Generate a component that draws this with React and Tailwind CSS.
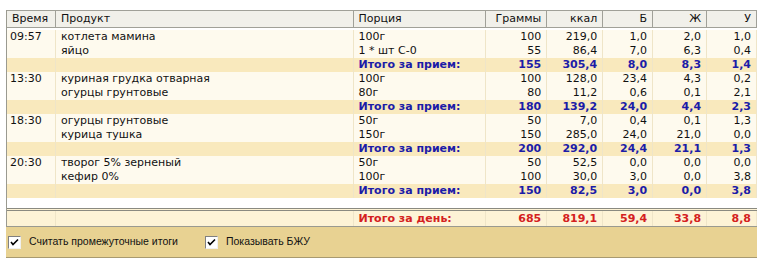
const meals = [
  {
    time: '09:57',
    items: [
      { name: 'котлета мамина', portion: '100г', g: '100', kcal: '219,0', b: '1,0', z: '2,0', u: '1,0' },
      { name: 'яйцо', portion: '1 * шт С-0', g: '55', kcal: '86,4', b: '7,0', z: '6,3', u: '0,4' },
    ],
    total: { g: '155', kcal: '305,4', b: '8,0', z: '8,3', u: '1,4' },
  },
  {
    time: '13:30',
    items: [
      { name: 'куриная грудка отварная', portion: '100г', g: '100', kcal: '128,0', b: '23,4', z: '4,3', u: '0,2' },
      { name: 'огурцы грунтовые', portion: '80г', g: '80', kcal: '11,2', b: '0,6', z: '0,1', u: '2,1' },
    ],
    total: { g: '180', kcal: '139,2', b: '24,0', z: '4,4', u: '2,3' },
  },
  {
    time: '18:30',
    items: [
      { name: 'огурцы грунтовые', portion: '50г', g: '50', kcal: '7,0', b: '0,4', z: '0,1', u: '1,3' },
      { name: 'курица тушка', portion: '150г', g: '150', kcal: '285,0', b: '24,0', z: '21,0', u: '0,0' },
    ],
    total: { g: '200', kcal: '292,0', b: '24,4', z: '21,1', u: '1,3' },
  },
  {
    time: '20:30',
    items: [
      { name: 'творог 5% зерненый', portion: '50г', g: '50', kcal: '52,5', b: '0,0', z: '0,0', u: '0,0' },
      { name: 'кефир 0%', portion: '100г', g: '100', kcal: '30,0', b: '3,0', z: '0,0', u: '3,8' },
    ],
    total: { g: '150', kcal: '82,5', b: '3,0', z: '0,0', u: '3,8' },
  },
]

const cell = 'border-r border-[#efe5c8] h-[14px] leading-[14px] whitespace-nowrap overflow-hidden'
const num = `${cell} text-right pr-[5px]`

function NumCells({ r }) {
  return (
    <>
      <div className={`${num} w-[61px]`}>{r.g}</div>
      <div className={`${num} w-[56px]`}>{r.kcal}</div>
      <div className={`${num} w-[50px]`}>{r.b}</div>
      <div className={`${num} w-[54px]`}>{r.z}</div>
      <div className={`${num} w-[50px]`}>{r.u}</div>
    </>
  )
}

function Check({ label }) {
  return (
    <label className="flex items-center gap-[8px]">
      <span className="w-[13px] h-[13px] bg-white border border-t-[#808080] border-l-[#808080] border-r-[#f0f0f0] border-b-[#f0f0f0] flex items-center justify-center">
        <svg width="9" height="9" viewBox="0 0 9 9">
          <path d="M1 4 L3 6.5 L8 1.5" stroke="#000" strokeWidth="1.6" fill="none" />
        </svg>
      </span>
      <span>{label}</span>
    </label>
  )
}

export default function App() {
  const head = 'h-[17px] leading-[16px] border-r border-b border-[#a0a098] bg-[#f1f0ea] px-[5px] whitespace-nowrap'
  return (
    <div className="w-[770px] h-[273px] bg-white pt-[10px] pl-[6px] text-[11px] text-[#111] font-['DejaVu_Sans',sans-serif]">
      <div className="w-[751px] border-l border-[#9a9a90]">
        {/* header */}
        <div className="flex border-t border-[#a0a098]">
          <div className={`${head} w-[49px]`}>Время</div>
          <div className={`${head} w-[298px]`}>Продукт</div>
          <div className={`${head} w-[133px]`}>Порция</div>
          <div className={`${head} w-[61px] text-right`}>Граммы</div>
          <div className={`${head} w-[56px] text-right`}>ккал</div>
          <div className={`${head} w-[50px] text-right`}>Б</div>
          <div className={`${head} w-[54px] text-right`}>Ж</div>
          <div className={`${head} w-[50px] text-right`}>У</div>
        </div>

        {/* body */}
        <div className="h-[180px] pt-[2px] bg-white">
          {meals.map((m) => (
            <div key={m.time}>
              {m.items.map((it, i) => (
                <div key={it.name} className="flex bg-[#fefaee]">
                  <div className={`${cell} w-[49px] pl-[3px]`}>{i === 0 ? m.time : ''}</div>
                  <div className={`${cell} w-[298px] pl-[5px]`}>{it.name}</div>
                  <div className={`${cell} w-[133px] pl-[5px]`}>{it.portion}</div>
                  <NumCells r={it} />
                </div>
              ))}
              <div className="flex bg-[#f9e9bd] font-bold text-[#1c1ca8]">
                <div className={`${cell} w-[49px]`} />
                <div className={`${cell} w-[298px]`} />
                <div className={`${cell} w-[133px] pl-[5px]`}>Итого за прием:</div>
                <NumCells r={m.total} />
              </div>
            </div>
          ))}
        </div>

        {/* day total */}
        <div className="flex border-t-[3px] border-double border-[#8a8a80] bg-[#fdf3d6] font-bold text-[#d42020] border-b border-b-[#9a9a90]">
          <div className="w-[49px] h-[15px] leading-[15px] border-r border-[#efe5c8]" />
          <div className="w-[298px] h-[15px] leading-[15px] border-r border-[#efe5c8]" />
          <div className="w-[133px] h-[15px] leading-[15px] pl-[5px] border-r border-[#efe5c8]">Итого за день:</div>
          {['685', '819,1', '59,4', '33,8', '8,8'].map((v, i) => (
            <div
              key={i}
              className={`h-[15px] leading-[15px] text-right pr-[5px] border-r border-[#efe5c8] ${['w-[61px]', 'w-[56px]', 'w-[50px]', 'w-[54px]', 'w-[50px]'][i]}`}
            >
              {v}
            </div>
          ))}
        </div>
      </div>

      {/* options panel */}
      <div className="w-[751px] h-[31px] bg-[#e8d292] border-b border-[#a89a70] flex items-center pl-[2px] gap-[27px] text-[10.5px] text-[#111] font-['Liberation_Sans',sans-serif]">
        <Check label="Считать промежуточные итоги" />
        <Check label="Показывать БЖУ" />
      </div>
    </div>
  )
}
